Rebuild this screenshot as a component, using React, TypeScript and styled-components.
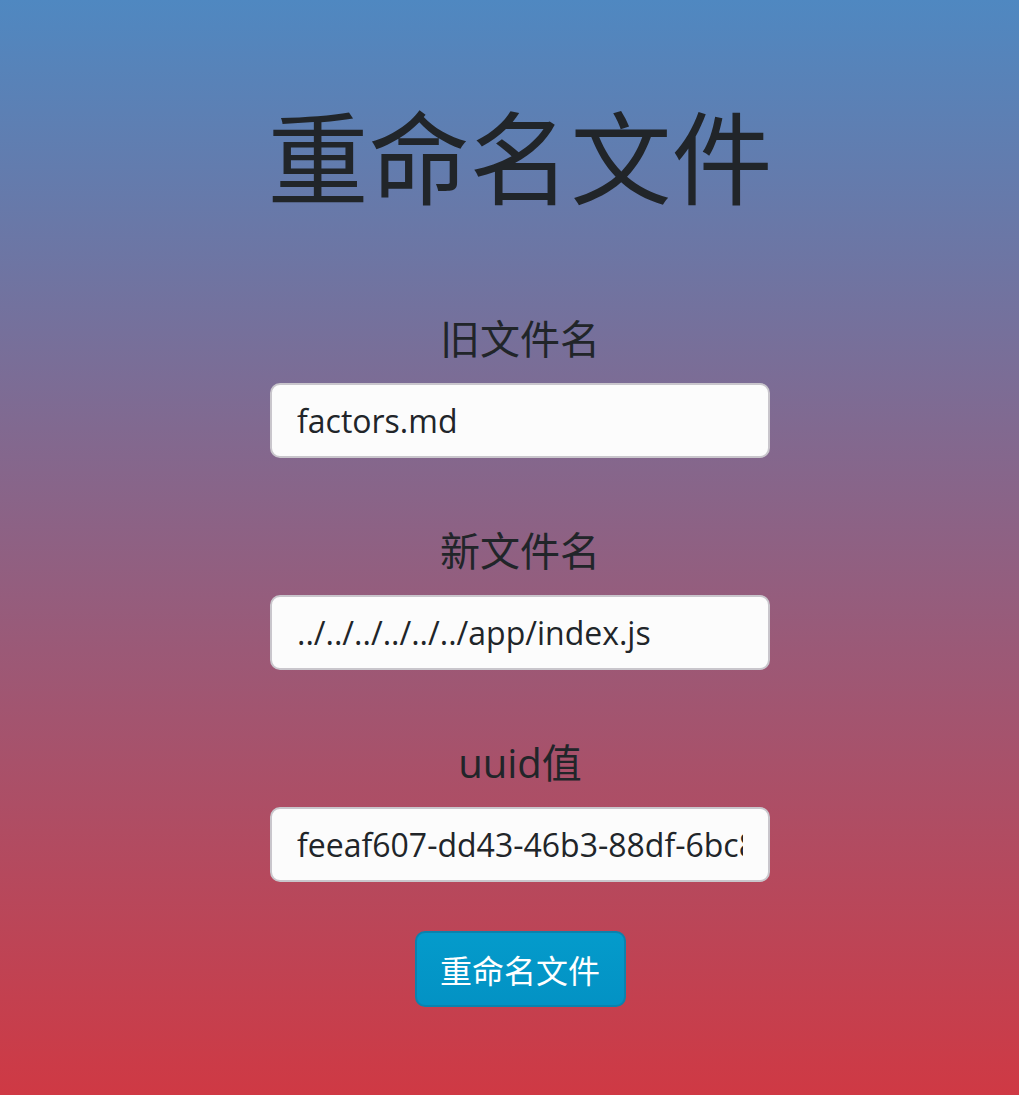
import React from "react";
import styled, { createGlobalStyle } from "styled-components";

const GlobalStyle = createGlobalStyle`
  html, body { margin: 0; padding: 0; }
  body {
    font-family: "Open Sans", "Noto Sans CJK SC", sans-serif;
    color: #212529;
  }
`;

const Page = styled.main`
  min-height: 1095px;
  box-sizing: border-box;
  background: linear-gradient(to bottom, #4f88c1 0%, #cf3944 100%);
  display: flex;
  flex-direction: column;
  align-items: center;
  padding: 98px 0 0 21px;
`;

const Title = styled.h1`
  margin: 0;
  font-size: 101px;
  font-weight: 400;
  line-height: 120px;
  color: #212529;
`;

const Form = styled.form`
  display: flex;
  flex-direction: column;
  align-items: center;
  margin-top: 97px;
  gap: 69px;
  width: 500px;
`;

const Group = styled.div`
  display: flex;
  flex-direction: column;
  align-items: center;
  gap: 20px;
  width: 100%;
`;

const Label = styled.label`
  font-size: 40px;
  line-height: 48px;
  color: #212529;
`;

const Input = styled.input`
  box-sizing: border-box;
  width: 500px;
  height: 75px;
  padding: 0 25px;
  border: 2px solid #c9c6cc;
  border-radius: 10px;
  background: #fcfcfc;
  font-family: "Open Sans", "Noto Sans CJK SC", sans-serif;
  font-size: 32px;
  color: #212529;
  outline: none;
`;

const Button = styled.button`
  margin-top: -20px;
  box-sizing: border-box;
  width: 211px;
  height: 76px;
  border: 2px solid #0a82ae;
  border-radius: 10px;
  background: linear-gradient(to bottom, #049bcb, #0392c4);
  color: #ffffff;
  font-family: "Open Sans", "Noto Sans CJK SC", sans-serif;
  font-size: 32px;
  cursor: pointer;
`;

export default function App() {
  return (
    <>
      <GlobalStyle />
      <Page>
        <Title>重命名文件</Title>
        <Form onSubmit={(e) => e.preventDefault()}>
          <Group>
            <Label>旧文件名</Label>
            <Input defaultValue="factors.md" />
          </Group>
          <Group>
            <Label>新文件名</Label>
            <Input defaultValue="../../../../../../app/index.js" />
          </Group>
          <Group>
            <Label>uuid值</Label>
            <Input defaultValue="feeaf607-dd43-46b3-88df-6bc8a1f2e9d0" />
          </Group>
          <Button type="submit">重命名文件</Button>
        </Form>
      </Page>
    </>
  );
}
